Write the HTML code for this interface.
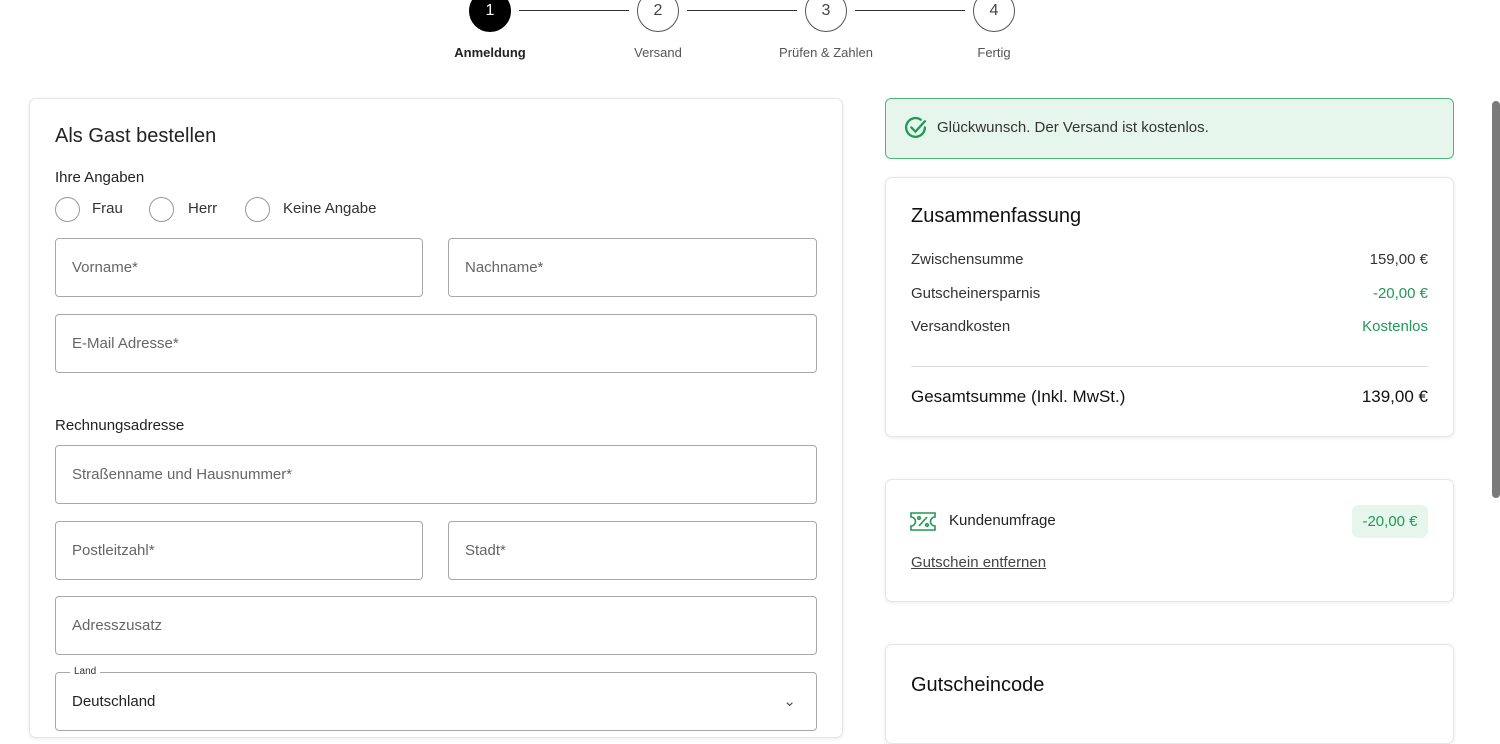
<!DOCTYPE html>
<html><head><meta charset="utf-8"><style>
*{box-sizing:border-box;margin:0;padding:0}
body{width:1500px;height:701px;overflow:hidden;background:#fff;font-family:"Liberation Sans",sans-serif;color:#222;position:relative}
.a{position:absolute;white-space:nowrap}
.circ{position:absolute;width:42px;height:42px;border-radius:50%;border:1px solid #555;text-align:center;line-height:40px;font-size:16px;color:#444;top:-10px}
.line{position:absolute;top:10px;height:1px;background:#333}
.lbl{position:absolute;top:45px;font-size:13px;color:#555;transform:translateX(-50%)}
.card{position:absolute;background:#fff;border:1px solid #e6e6e6;border-radius:7px;box-shadow:0 1px 4px rgba(0,0,0,.08)}
.in{position:absolute;border:1px solid #a8a8a8;border-radius:4px;height:59px;font-size:15px;color:#666;padding:0 16px;line-height:57px}
.rad{position:absolute;width:25px;height:25px;border-radius:50%;border:1px solid #999;top:197px}
.rt{font-size:15px;color:#333}
</style></head><body>
<div class="circ" style="left:469px;background:#000;color:#fff;border-color:#000">1</div>
<div class="line" style="left:519px;width:110px"></div>
<div class="circ" style="left:637px">2</div>
<div class="line" style="left:687px;width:110px"></div>
<div class="circ" style="left:805px">3</div>
<div class="line" style="left:855px;width:110px"></div>
<div class="circ" style="left:973px">4</div>
<div class="lbl" style="left:490px;color:#222;font-weight:bold">Anmeldung</div>
<div class="lbl" style="left:658px">Versand</div>
<div class="lbl" style="left:826px">Prüfen &amp; Zahlen</div>
<div class="lbl" style="left:994px">Fertig</div>

<div class="card" style="left:29px;top:98px;width:814px;height:640px"></div>
<div class="a" style="left:55px;top:125px;font-size:20px">Als Gast bestellen</div>
<div class="a" style="left:55px;top:169px;font-size:15px">Ihre Angaben</div>
<div class="rad" style="left:55px"></div><div class="a" style="left:92px;top:200px;font-size:15px;color:#333">Frau</div>
<div class="rad" style="left:149px"></div><div class="a" style="left:188px;top:200px;font-size:15px;color:#333">Herr</div>
<div class="rad" style="left:245px"></div><div class="a" style="left:283px;top:200px;font-size:15px;color:#333">Keine Angabe</div>
<div class="in" style="left:55px;top:238px;width:368px">Vorname*</div>
<div class="in" style="left:448px;top:238px;width:369px">Nachname*</div>
<div class="in" style="left:55px;top:314px;width:762px">E-Mail Adresse*</div>
<div class="a" style="left:55px;top:417px;font-size:15px">Rechnungsadresse</div>
<div class="in" style="left:55px;top:445px;width:762px">Straßenname und Hausnummer*</div>
<div class="in" style="left:55px;top:521px;width:368px">Postleitzahl*</div>
<div class="in" style="left:448px;top:521px;width:369px">Stadt*</div>
<div class="in" style="left:55px;top:596px;width:762px">Adresszusatz</div>
<div class="in" style="left:55px;top:672px;width:762px;color:#222">Deutschland<span style="position:absolute;right:20px;top:0;color:#555">⌄</span></div>
<div class="a" style="left:70px;top:666px;font-size:10px;background:#fff;padding:0 4px;color:#333">Land</div>

<div class="a" style="left:885px;top:98px;width:569px;height:61px;background:#e6f6ec;border:1px solid #4cb878;border-radius:6px"></div>
<svg class="a" style="left:903px;top:116px" width="25" height="25" viewBox="0 0 24 24" fill="none" stroke="#1f9a55" stroke-width="2.2" stroke-linecap="round"><path d="M21 11a9 9 0 1 1-4-7.5"/><path d="M8 11l4 4 9-10"/></svg>
<div class="a" style="left:937px;top:119px;font-size:15px;color:#333">Glückwunsch. Der Versand ist kostenlos.</div>

<div class="card" style="left:885px;top:177px;width:569px;height:260px"></div>
<div class="a" style="left:911px;top:205px;font-size:20px;color:#111">Zusammenfassung</div>
<div class="a rt" style="left:911px;top:251px">Zwischensumme</div><div class="a rt" style="right:72px;top:251px">159,00 €</div>
<div class="a rt" style="left:911px;top:285px">Gutscheinersparnis</div><div class="a rt" style="right:72px;top:285px;color:#1f9a55">-20,00 €</div>
<div class="a rt" style="left:911px;top:318px">Versandkosten</div><div class="a rt" style="right:72px;top:318px;color:#1f9a55">Kostenlos</div>
<div class="a" style="left:911px;top:366px;width:517px;height:1px;background:#ddd"></div>
<div class="a" style="left:911px;top:387px;font-size:17px;color:#111">Gesamtsumme (Inkl. MwSt.)</div><div class="a" style="right:72px;top:387px;font-size:17px;color:#111">139,00 €</div>

<div class="card" style="left:885px;top:479px;width:569px;height:123px"></div>
<svg class="a" style="left:910px;top:512px" width="26" height="19" viewBox="0 0 26 19" fill="none" stroke="#1f9a55" stroke-width="1.6"><path d="M1 1h24v4a4 4 0 0 0 0 9v4H1v-4a4 4 0 0 0 0-9z"/><path d="M9 14l8-9"/><circle cx="9" cy="6" r="1.3"/><circle cx="17" cy="13" r="1.3"/></svg>
<div class="a" style="left:949px;top:512px;font-size:15px;color:#222">Kundenumfrage</div>
<div class="a" style="left:1352px;top:505px;width:76px;height:33px;background:#e6f6ec;border-radius:7px;text-align:center;line-height:33px;font-size:15px;color:#1f9a55">-20,00 €</div>
<div class="a" style="left:911px;top:554px;font-size:15px;color:#444;text-decoration:underline">Gutschein entfernen</div>

<div class="card" style="left:885px;top:644px;width:569px;height:100px"></div>
<div class="a" style="left:911px;top:674px;font-size:20px;color:#111">Gutscheincode</div>

<div class="a" style="left:1492px;top:101px;width:8px;height:397px;background:#7a7a7a;border-radius:4px"></div>
</body></html>
